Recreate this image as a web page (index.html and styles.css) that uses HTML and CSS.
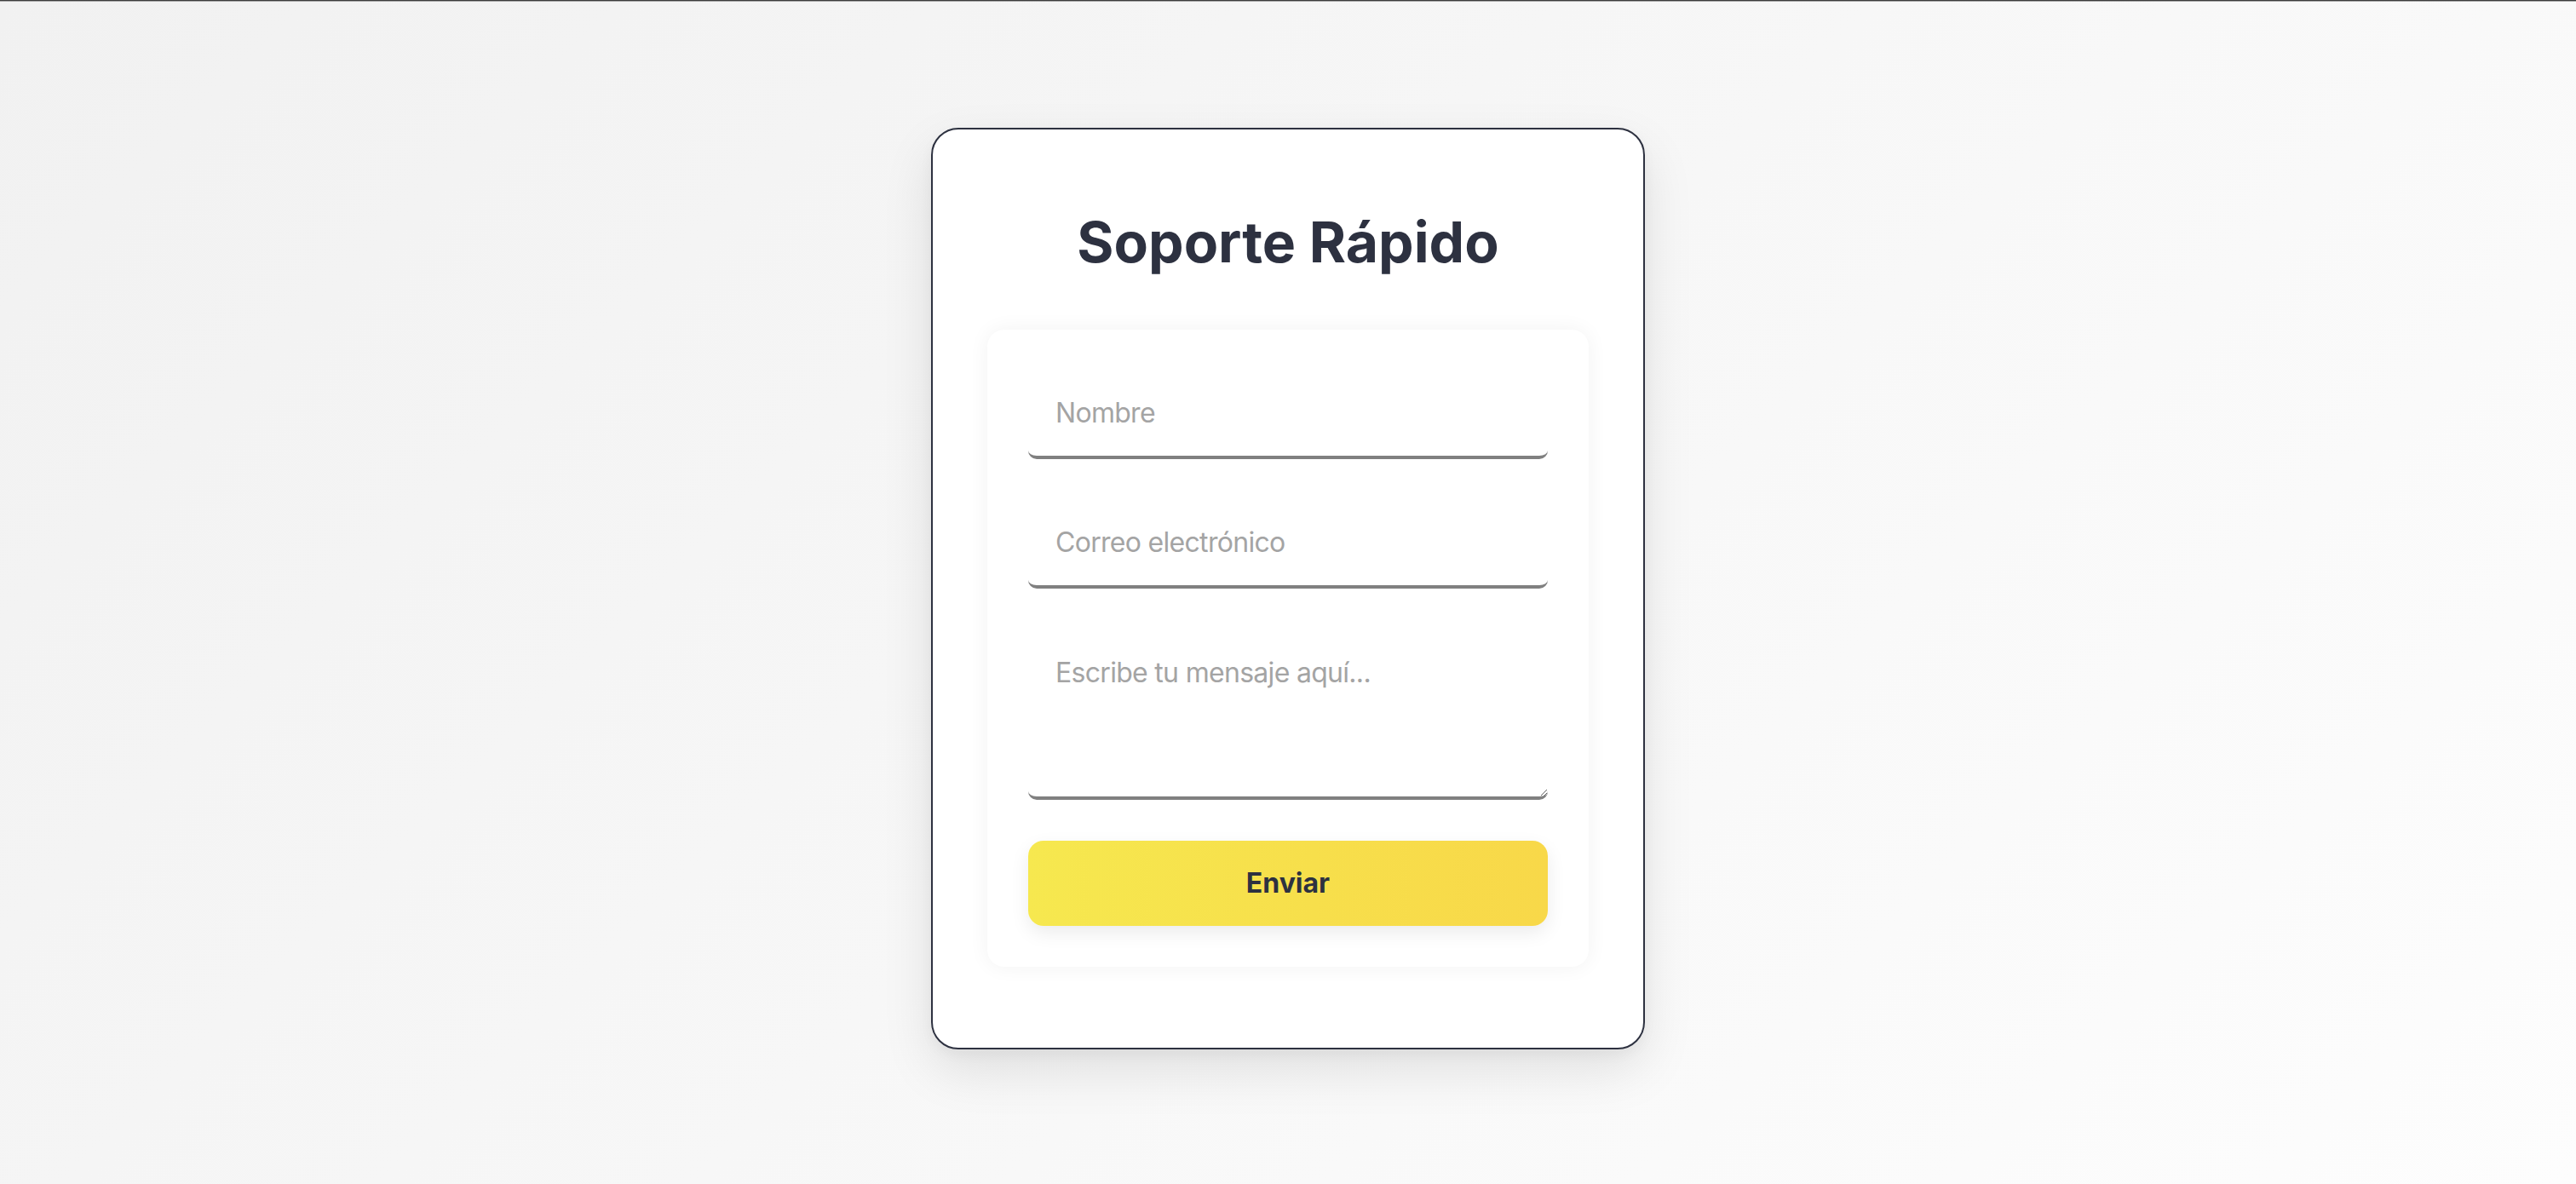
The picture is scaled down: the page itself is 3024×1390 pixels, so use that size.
FILE: index.html
```html
<!DOCTYPE html>
<html lang="es">
<head>
<meta charset="utf-8">
<title>Soporte Rápido</title>
<link rel="stylesheet" href="styles.css">
</head>
<body>
  <main class="card">
    <h1 class="title">Soporte Rápido</h1>
    <form class="form">
      <input class="field" type="text" placeholder="Nombre">
      <input class="field" type="email" placeholder="Correo electrónico">
      <textarea class="field field-area" placeholder="Escribe tu mensaje aquí..."></textarea>
      <button class="submit" type="button">Enviar</button>
    </form>
  </main>
</body>
</html>
```
FILE: styles.css
```css
* {
  box-sizing: border-box;
}

html, body {
  margin: 0;
  padding: 0;
}

body {
  min-height: 100vh;
  display: flex;
  align-items: center;
  justify-content: center;
  padding-bottom: 9px;
  background: linear-gradient(135deg, #f1f1f1 0%, #f7f7f7 50%, #fdfdfd 100%);
  box-shadow: inset 0 1px 0 #3c3c3c, inset 0 2px 0 #a8a8a8;
  font-family: Inter, "Noto Sans", "Liberation Sans", sans-serif;
}

.card {
  width: 838px;
  background: #ffffff;
  border: 2px solid #2d3140;
  border-radius: 32px;
  padding: 64px 64px 95px;
  box-shadow: 0 24px 60px rgba(0, 0, 0, 0.10), 0 6px 16px rgba(0, 0, 0, 0.04);
}

.title {
  margin: 30px 0 65px;
  font-size: 66px;
  line-height: 76px;
  font-weight: 700;
  color: #2d3140;
  text-align: center;
}

.form {
  display: flex;
  flex-direction: column;
  gap: 48px;
  padding: 48px;
  background: #ffffff;
  border-radius: 20px;
  box-shadow: 0 0 24px rgba(0, 0, 0, 0.055);
}

.field {
  display: block;
  width: 100%;
  height: 104px;
  padding: 0 32px;
  border: 0;
  border-bottom: 4px solid #808080;
  border-radius: 10px;
  background: #ffffff;
  font-family: Inter, "Noto Sans", "Liberation Sans", sans-serif;
  font-size: 32px;
  letter-spacing: -0.7px;
  color: #2d3140;
  outline: none;
}

.field::placeholder {
  color: #a4a4a4;
  opacity: 1;
}

.field-area {
  height: 200px;
  padding: 31px 32px;
  line-height: normal;
  resize: vertical;
}

.submit {
  display: block;
  width: 100%;
  height: 100px;
  border: 0;
  border-radius: 18px;
  background: linear-gradient(90deg, #f6e84f 0%, #f7df4b 55%, #f8d849 100%);
  box-shadow: 0 8px 22px rgba(0, 0, 0, 0.08);
  font-family: Inter, "Noto Sans", "Liberation Sans", sans-serif;
  font-size: 32px;
  font-weight: 700;
  color: #2d3140;
  cursor: pointer;
}
```
